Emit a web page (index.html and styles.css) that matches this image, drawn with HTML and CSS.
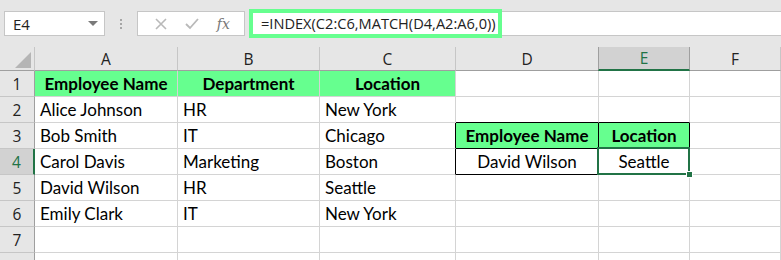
FILE: index.html
```html
<!DOCTYPE html>
<html lang="en">
<head>
    <meta charset="UTF-8">
    <title>INDEX MATCH</title>
    <link rel="stylesheet" href="styles.css">
</head>
<body>

    <div class="toolbar">
        <div class="name-box">
            <span>E4</span>
            <span class="caret"></span>
        </div>
        <div class="grip">
            <span></span><span></span><span></span>
        </div>
        <div class="fx-buttons">
            <svg width="14" height="14" viewBox="0 0 14 14"><path d="M2 2 L12 12 M12 2 L2 12" stroke="#b9b9b9" stroke-width="1.6" fill="none"/></svg>
            <svg width="16" height="14" viewBox="0 0 16 14"><path d="M2 7 L6 11 L14 2" stroke="#b9b9b9" stroke-width="1.8" fill="none"/></svg>
            <span class="fx">fx</span>
        </div>
        <div class="formula-bar">
            <div class="formula-text">=INDEX(C2:C6,MATCH(D4,A2:A6,0))</div>
        </div>
    </div>

    <div class="sheet">
        <div class="corner"><span class="tri"></span></div>
        <div class="col-head">A</div>
        <div class="col-head">B</div>
        <div class="col-head">C</div>
        <div class="col-head">D</div>
        <div class="col-head selected">E</div>
        <div class="col-head">F</div>

        <div class="row-head">1</div>
        <div class="cell head">Employee Name</div>
        <div class="cell head">Department</div>
        <div class="cell head">Location</div>
        <div class="cell"></div>
        <div class="cell"></div>
        <div class="cell"></div>

        <div class="row-head">2</div>
        <div class="cell">Alice Johnson</div>
        <div class="cell">HR</div>
        <div class="cell">New York</div>
        <div class="cell b-bottom"></div>
        <div class="cell b-bottom"></div>
        <div class="cell"></div>

        <div class="row-head">3</div>
        <div class="cell">Bob Smith</div>
        <div class="cell">IT</div>
        <div class="cell b-right">Chicago</div>
        <div class="cell head b-right b-bottom">Employee Name</div>
        <div class="cell head b-right b-bottom">Location</div>
        <div class="cell"></div>

        <div class="row-head selected">4</div>
        <div class="cell">Carol Davis</div>
        <div class="cell">Marketing</div>
        <div class="cell b-right">Boston</div>
        <div class="cell center b-right b-bottom">David Wilson</div>
        <div class="cell center b-right b-bottom active">Seattle<span class="handle"></span></div>
        <div class="cell"></div>

        <div class="row-head">5</div>
        <div class="cell">David Wilson</div>
        <div class="cell">HR</div>
        <div class="cell">Seattle</div>
        <div class="cell"></div>
        <div class="cell"></div>
        <div class="cell"></div>

        <div class="row-head">6</div>
        <div class="cell">Emily Clark</div>
        <div class="cell">IT</div>
        <div class="cell">New York</div>
        <div class="cell"></div>
        <div class="cell"></div>
        <div class="cell"></div>

        <div class="row-head">7</div>
        <div class="cell"></div>
        <div class="cell"></div>
        <div class="cell"></div>
        <div class="cell"></div>
        <div class="cell"></div>
        <div class="cell"></div>

        <div class="row-head"></div>
        <div class="cell"></div>
        <div class="cell"></div>
        <div class="cell"></div>
        <div class="cell"></div>
        <div class="cell"></div>
        <div class="cell"></div>
    </div>

</body>
</html>
```

FILE: styles.css
```css
body {
    margin: 0;
    width: 781px;
    height: 260px;
    overflow: hidden;
    background: #fff;
    font-family: "Open Sans", sans-serif;
}
.toolbar {
    display: flex;
    align-items: flex-start;
    height: 47px;
    padding-top: 11px;
    box-sizing: border-box;
    background: #e6e6e6;
}
.name-box {
    display: flex;
    align-items: center;
    justify-content: space-between;
    box-sizing: border-box;
    width: 101px;
    height: 25px;
    margin-left: 4px;
    padding: 0 6px 0 8px;
    background: #fff;
    border: 1px solid #c6c6c6;
    font-size: 15px;
    color: #222;
}
.caret {
    width: 0;
    height: 0;
    border-left: 5px solid transparent;
    border-right: 5px solid transparent;
    border-top: 5px solid #7a7a7a;
}
.grip {
    width: 32px;
    height: 25px;
    display: flex;
    flex-direction: column;
    align-items: center;
    justify-content: center;
    gap: 2px;
}
.grip span {
    width: 2px;
    height: 2px;
    background: #a6a6a6;
}
.fx-buttons {
    display: flex;
    align-items: center;
    justify-content: space-around;
    box-sizing: border-box;
    width: 108px;
    height: 25px;
    padding: 0 6px 0 8px;
    background: #fff;
    border: 1px solid #c6c6c6;
}
.fx {
    font-family: "DejaVu Serif", serif;
    font-style: italic;
    font-size: 14px;
    color: #777;
}
.formula-bar {
    flex: 1;
    display: flex;
    align-items: center;
    height: 25px;
    margin-left: 4px;
    box-sizing: border-box;
    background: #fff;
    border-top: 1px solid #c6c6c6;
    border-bottom: 1px solid #c6c6c6;
}
.formula-text {
    box-sizing: border-box;
    width: 253px;
    height: 29px;
    padding-left: 8px;
    border: 4px solid #66ff8f;
    font-size: 14.6px;
    line-height: 21px;
    color: #222;
}
.sheet {
    display: grid;
    grid-template-columns: 35px 143px 142px 136px 143px 91px 91px;
    grid-template-rows: 24px repeat(8, 26px);
}
.corner {
    position: relative;
    background: #e6e6e6;
    border-right: 1px solid #c6c6c6;
    border-bottom: 1px solid #9f9f9f;
}
.tri {
    position: absolute;
    right: 3px;
    bottom: 2px;
    width: 0;
    height: 0;
    border-left: 16px solid transparent;
    border-bottom: 16px solid #b5b5b5;
}
.col-head, .row-head {
    display: flex;
    align-items: center;
    justify-content: center;
    background: #e6e6e6;
    color: #222;
    font-size: 15.5px;
}
.col-head {
    border-right: 1px solid #c6c6c6;
    border-bottom: 1px solid #9f9f9f;
}
.col-head.selected {
    background: #d2d2d2;
    color: #217346;
    border-left: 1px solid #9f9f9f;
    border-right: 1px solid #9f9f9f;
    border-bottom: 2px solid #217346;
    margin-left: -1px;
}
.row-head {
    border-right: 1px solid #9f9f9f;
    border-bottom: 1px solid #c6c6c6;
}
.row-head.selected {
    background: #d2d2d2;
    color: #217346;
    border-right: 2px solid #217346;
}
.cell {
    position: relative;
    display: flex;
    align-items: center;
    padding-left: 5px;
    border-right: 1px solid #d4d4d4;
    border-bottom: 1px solid #d4d4d4;
    font-family: Lato, sans-serif;
    font-size: 17px;
    color: #000;
    white-space: nowrap;
}
.cell.head {
    justify-content: center;
    padding-left: 0;
    background: #66ff8f;
    font-weight: bold;
}
.cell.center {
    justify-content: center;
    padding-left: 0;
}
.b-right {
    border-right-color: #000;
}
.b-bottom {
    border-bottom-color: #000;
}
.active::after {
    content: "";
    position: absolute;
    top: -2px;
    left: -2px;
    right: -1px;
    bottom: -1px;
    border: 2px solid #217346;
}
.handle {
    position: absolute;
    right: -4px;
    bottom: -4px;
    width: 5px;
    height: 5px;
    background: #217346;
    border: 1px solid #fff;
    z-index: 2;
}
```
